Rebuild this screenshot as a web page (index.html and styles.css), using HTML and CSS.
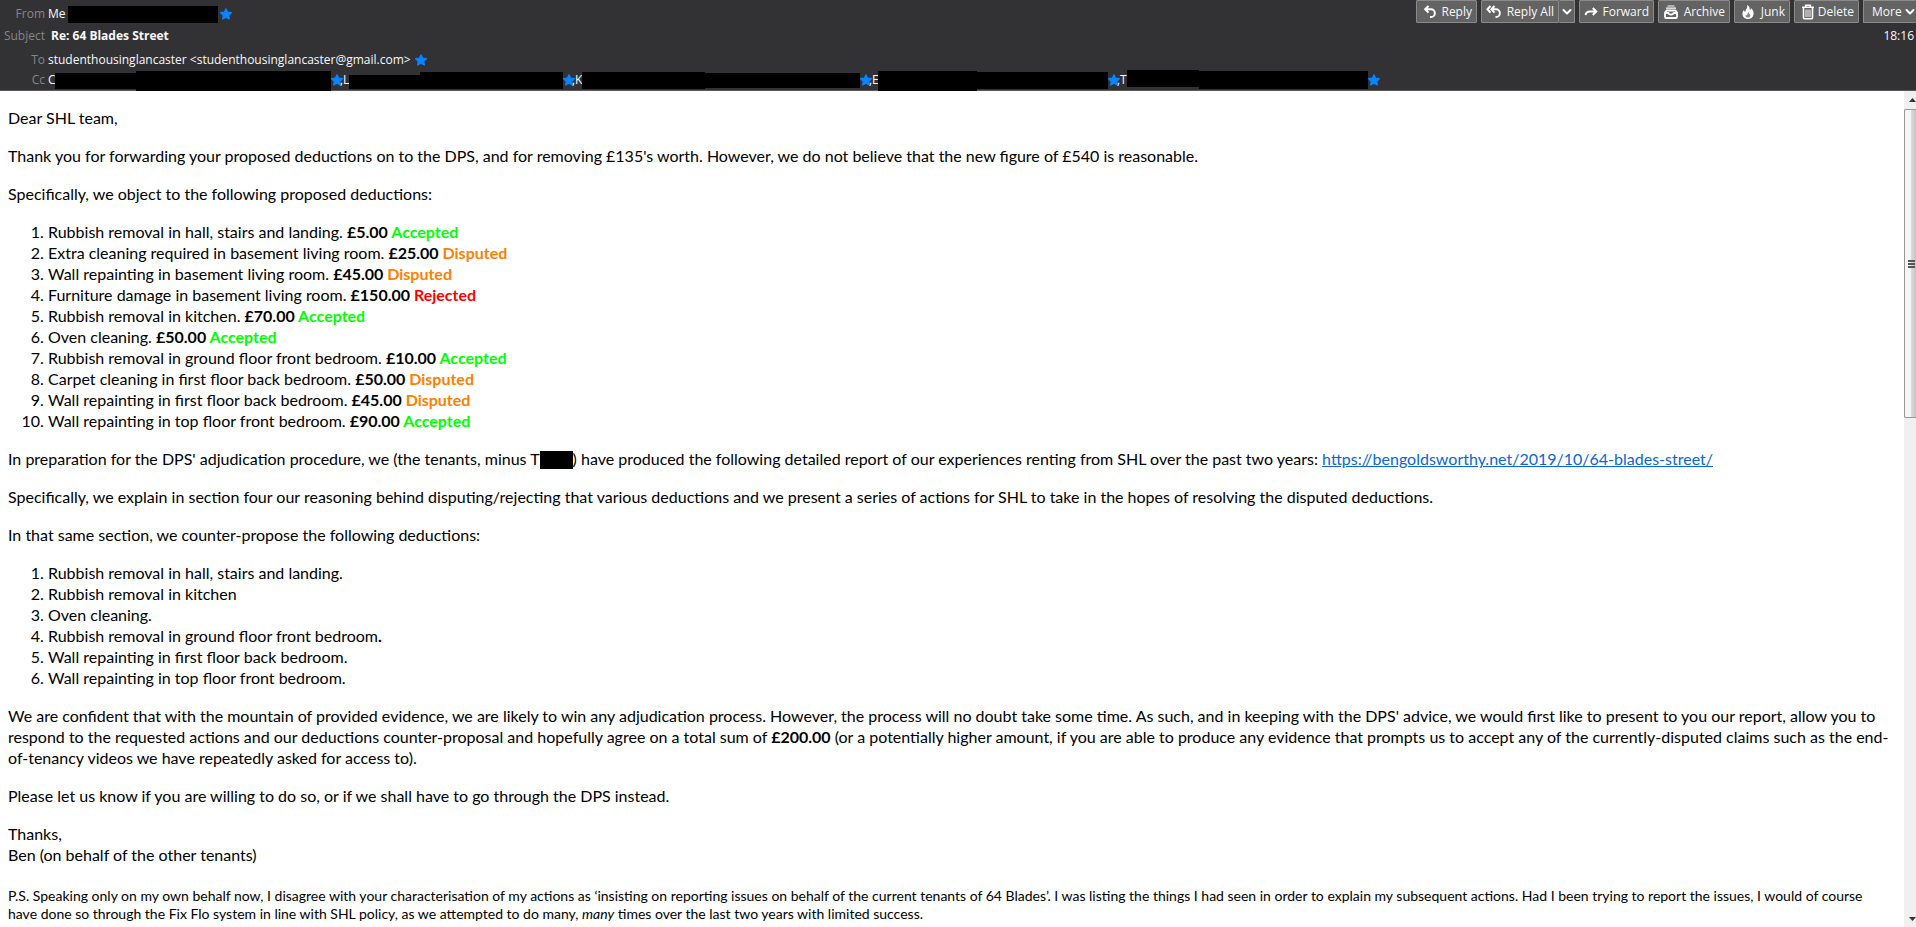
FILE: index.html
```html
<!DOCTYPE html>
<html lang="en">
<head>
    <meta charset="UTF-8">
    <meta name="viewport" content="width=device-width, initial-scale=1.0">
    <title>Re: 64 Blades Street</title>
    <link rel="stylesheet" href="styles.css">
</head>
<body>
    <svg class="defs" width="0" height="0">
        <symbol id="star" viewBox="0 0 12 12">
            <path d="M6 .8 7.700 4.200l3.700.5-2.700 2.600.7 3.700L6 9.300 2.600 11l.7-3.700L.6 4.700l3.700-.5z" fill="#0a84ff" stroke="#0a84ff" stroke-width="1.200" stroke-linejoin="round"/>
        </symbol>
        <symbol id="chevron" viewBox="0 0 10 10">
            <path d="M1.500 3 5 6.500 8.500 3" fill="none" stroke="#fff" stroke-width="2" stroke-linecap="round" stroke-linejoin="round"/>
        </symbol>
    </svg>

    <header class="header">
        <div class="fields">
            <div class="row from">
                <span class="label">From</span>
                <span class="value">Me</span>
                <span class="redacted me"></span>
                <svg class="star"><use href="#star"/></svg>
            </div>
            <div class="row subject">
                <span class="label">Subject</span>
                <b class="value">Re: 64 Blades Street</b>
            </div>
            <div class="row to">
                <span class="label">To</span>
                <span class="value">studenthousinglancaster &lt;studenthousinglancaster@gmail.com&gt;</span>
                <svg class="star"><use href="#star"/></svg>
            </div>
            <div class="row cc">
                <span class="label">Cc</span>
                <span class="person c"><span class="initial">C</span><i></i><i></i><svg class="star"><use href="#star"/></svg></span>
                <span class="person l"><span class="initial">,L</span><i></i><i></i><svg class="star"><use href="#star"/></svg></span>
                <span class="person k"><span class="initial">,K</span><i></i><i></i><svg class="star"><use href="#star"/></svg></span>
                <span class="person e"><span class="initial">,E</span><i></i><i></i><svg class="star"><use href="#star"/></svg></span>
                <span class="person t"><span class="initial">,T</span><i></i><i></i><svg class="star"><use href="#star"/></svg></span>
            </div>
        </div>

        <div class="side">
            <div class="toolbar">
                <button class="reply">
                    <svg width="14" height="14" viewBox="0 0 14 14" fill="none" stroke="#fff" stroke-width="2"><path d="M5.500 1 2.200 4.300l3.300 3.300M2.500 4.300H8a3.800 3.800 0 0 1 0 7.700H7"/></svg>
                    Reply
                </button>
                <div class="split">
                    <button class="reply-all">
                        <svg width="16" height="14" viewBox="0 0 16 14" fill="none" stroke="#fff" stroke-width="2"><path d="M4.500 1 1.400 4.300l3.100 3.300M8.500 1 5.400 4.300l3.100 3.300M5.700 4.300H10a3.800 3.800 0 0 1 0 7.700H9.500"/></svg>
                        Reply All
                    </button>
                    <button class="drop" aria-label="Reply options"><svg width="10" height="10"><use href="#chevron"/></svg></button>
                </div>
                <button class="forward">
                    <svg width="14" height="14" viewBox="0 0 14 14" fill="none" stroke="#fff" stroke-width="2"><path d="M1.500 10C2 7.500 3.500 6.500 6 6.500h6M8.800 3l3.500 3.500L8.800 10"/></svg>
                    Forward
                </button>
                <button class="archive">
                    <svg width="16" height="14" viewBox="0 0 16 14" fill="none" stroke="#fff" stroke-linejoin="round"><path d="M4.500 1h7M3 3.200h10" stroke-width="1.200"/><path d="M2 7.500 3.500 5.500h9L14 7.500V12a1 1 0 0 1-1 1H3a1 1 0 0 1-1-1zM2 8h3.500c0 2 5 2 5 0H14" stroke-width="1.800"/></svg>
                    Archive
                </button>
                <button class="junk">
                    <svg width="14" height="16" viewBox="0 0 14 16"><path d="M6 1c3 1.500 2.500 3.500 3 5 .8-.3 1-1.300.9-2C12 6 13 8 12.500 10.500 12 13.500 9.500 15 7 15s-5.200-1.500-5.500-4.500C1.300 8.500 2 7 3 6c.2 1.200.5 1.800 1.300 2C4.500 5 7 4 6 1z" fill="#fff"/><path d="M7 7.500c.5 2 2.800 2.800 2.300 4.500C9 13.200 8 13.600 7 13.600S4.400 13 4.300 11.500C5.500 12 7 10.500 7 7.500z" fill="#888"/></svg>
                    Junk
                </button>
                <button class="delete">
                    <svg width="14" height="16" viewBox="0 0 14 16" fill="none" stroke="#fff"><path d="M1 3.200h12M4.700 3V1.200h4.600V3" stroke-width="1.600"/><path d="M2.500 4v9.500a1.200 1.200 0 0 0 1.200 1.200h6.600a1.200 1.200 0 0 0 1.200-1.200V4" stroke-width="1.600"/><path d="M5 5.500V13M7 5.500V13M9 5.500V13"/></svg>
                    Delete
                </button>
                <button class="more">More <svg width="10" height="10"><use href="#chevron"/></svg></button>
            </div>
            <time class="time">18:16</time>
        </div>
    </header>

    <div class="pane">
        <main class="message">
            <p>Dear SHL team,</p>
            <p>Thank you for forwarding your proposed deductions on to the DPS, and for removing £135's worth. However, we do not believe that the new figure of £540 is reasonable.</p>
            <p>Specifically, we object to the following proposed deductions:</p>
            <ol>
                <li>Rubbish removal in hall, stairs and landing. <b>£5.00 <span class="accepted">Accepted</span></b></li>
                <li>Extra cleaning required in basement living room. <b>£25.00 <span class="disputed">Disputed</span></b></li>
                <li>Wall repainting in basement living room. <b>£45.00 <span class="disputed">Disputed</span></b></li>
                <li>Furniture damage in basement living room. <b>£150.00 <span class="rejected">Rejected</span></b></li>
                <li>Rubbish removal in kitchen. <b>£70.00 <span class="accepted">Accepted</span></b></li>
                <li>Oven cleaning. <b>£50.00 <span class="accepted">Accepted</span></b></li>
                <li>Rubbish removal in ground floor front bedroom. <b>£10.00 <span class="accepted">Accepted</span></b></li>
                <li>Carpet cleaning in first floor back bedroom. <b>£50.00 <span class="disputed">Disputed</span></b></li>
                <li>Wall repainting in first floor back bedroom. <b>£45.00 <span class="disputed">Disputed</span></b></li>
                <li>Wall repainting in top floor front bedroom. <b>£90.00 <span class="accepted">Accepted</span></b></li>
            </ol>
            <p>In preparation for the DPS' adjudication procedure, we (the tenants, minus T<span class="redacted name"></span>) have produced the following detailed report of our experiences renting from SHL over the past two years: <a href="https://bengoldsworthy.net/2019/10/64-blades-street/">https://bengoldsworthy.net/2019/10/64-blades-street/</a></p>
            <p>Specifically, we explain in section four our reasoning behind disputing/rejecting that various deductions and we present a series of actions for SHL to take in the hopes of resolving the disputed deductions.</p>
            <p>In that same section, we counter-propose the following deductions:</p>
            <ol>
                <li>Rubbish removal in hall, stairs and landing.</li>
                <li>Rubbish removal in kitchen</li>
                <li>Oven cleaning.</li>
                <li>Rubbish removal in ground floor front bedroom<b>.</b></li>
                <li>Wall repainting in first floor back bedroom.</li>
                <li>Wall repainting in top floor front bedroom.</li>
            </ol>
            <p>We are confident that with the mountain of provided evidence, we are likely to win any adjudication process. However, the process will no doubt take some time. As such, and in keeping with the DPS' advice, we would first like to present to you our report, allow you to respond to the requested actions and our deductions counter-proposal and hopefully agree on a total sum of <b>£200.00</b> (or a potentially higher amount, if you are able to produce any evidence that prompts us to accept any of the currently-disputed claims such as the end-of-tenancy videos we have repeatedly asked for access to).</p>
            <p>Please let us know if you are willing to do so, or if we shall have to go through the DPS instead.</p>
            <p>Thanks,<br>Ben (on behalf of the other tenants)</p>
            <p class="ps">P.S. Speaking only on my own behalf now, I disagree with your characterisation of my actions as ‘insisting on reporting issues on behalf of the current tenants of 64 Blades’. I was listing the things I had seen in order to explain my subsequent actions. Had I been trying to report the issues, I would of course have done so through the Fix Flo system in line with SHL policy, as we attempted to do many, <em>many</em> times over the last two years with limited success.</p>
        </main>
        <div class="scrollbar">
            <svg class="arrow" viewBox="0 0 7 4"><path d="M0 4 3.500 0 7 4z" fill="#333"/></svg>
            <div class="thumb"><i></i><i></i><i></i></div>
            <svg class="arrow down" viewBox="0 0 7 4"><path d="M0 0h7L3.500 4z" fill="#333"/></svg>
        </div>
    </div>
</body>
</html>
```

FILE: styles.css
```css
* {
    box-sizing: border-box;
}
body {
    margin: 0;
    height: 100vh;
    display: flex;
    flex-direction: column;
    overflow: hidden;
    background: #fff;
    color: #000;
    font-family: Lato, Calibri, sans-serif;
    font-size: 16px;
    line-height: 21px;
}
.defs {
    display: none;
}

/* header */
.header {
    flex: none;
    display: flex;
    justify-content: space-between;
    background: #323234;
    border-bottom: 1px solid #5a5a5c;
    color: #f9f9fa;
    font-family: "Open Sans", "Segoe UI", sans-serif;
    font-size: 12px;
    line-height: 16px;
    white-space: nowrap;
}
.row {
    display: flex;
    align-items: center;
    height: 20px;
}
.row.from {
    height: 26px;
    padding-top: 2px;
}
.row.to {
    height: 24px;
    padding-top: 4px;
}
.label {
    width: 45px;
    margin-right: 3px;
    text-align: right;
    color: #868688;
}
.subject .value {
    margin-left: 3px;
}
.star {
    flex: none;
    width: 12px;
    height: 12px;
}
.to .star {
    margin-left: 4px;
}
.redacted {
    background: #000;
}
.redacted.me {
    width: 150px;
    height: 17px;
    margin: 0 2px 0 3px;
}
.from .value {
    width: 17px;
}

/* cc list, each address blacked out in two strips */
.cc {
    align-items: flex-start;
}
.cc .label {
    line-height: 20px;
}
.person {
    display: flex;
    align-items: flex-start;
    height: 20px;
}
.person .star {
    margin-top: 4px;
}
/* the comma tucks in under the star before it */
.initial {
    width: 9px;
    margin-left: -3px;
    line-height: 20px;
}
.person.c .initial {
    width: 7px;
    margin-left: 0;
}
.person.k .initial,
.person.t .initial {
    width: 10px;
}
.person i {
    height: 17px;
    margin-top: 2px;
    background: #000;
}
.c i:nth-of-type(1) { width: 81px; margin-top: 3px; height: 16px; }
.c i:nth-of-type(2) { width: 195px; margin-top: 1px; height: 20px; }
.l i:nth-of-type(1) { width: 71px; margin-top: 5px; height: 14px; }
.l i:nth-of-type(2) { width: 143px; }
.k i:nth-of-type(1) { width: 123px; }
.k i:nth-of-type(2) { width: 155px; margin-top: 3px; height: 15px; }
.e i:nth-of-type(1) { width: 99px; margin-top: 1px; height: 20px; }
.e i:nth-of-type(2) { width: 131px; }
.t i:nth-of-type(1) { width: 72px; margin-top: 0; }
.t i:nth-of-type(2) { width: 169px; margin-top: 1px; height: 18px; }

/* toolbar */
.side {
    display: flex;
    flex-direction: column;
    align-items: flex-end;
}
.toolbar {
    display: flex;
    gap: 4px;
    margin-bottom: 5px;
}
.toolbar button {
    display: flex;
    align-items: center;
    justify-content: space-between;
    height: 23px;
    margin: 0;
    padding: 0 4px 0 6px;
    border: 1px solid #8a8a8b;
    border-radius: 1px;
    background: #636364;
    color: #f9f9fa;
    font: inherit;
}
.toolbar .reply { width: 61px; }
.toolbar .reply-all { width: 78px; padding-left: 4px; }
.toolbar .forward { width: 75px; padding-left: 4px; }
.toolbar .archive { width: 72px; padding-left: 4px; }
.toolbar .junk { width: 56px; }
.toolbar .delete { width: 65px; }
.toolbar .more { width: 53px; padding: 0 1px 0 8px; border-right: 0; }
.split {
    display: flex;
}
.toolbar .drop {
    width: 16px;
    padding: 0;
    justify-content: center;
    border-left: 0;
}
.time {
    margin-right: 2px;
}

/* message */
.pane {
    flex: 1;
    min-height: 0;
    display: flex;
}
.message {
    flex: 1;
    padding: 16px 10px 0 8px;
    overflow: hidden;
}
.message p,
.message ol {
    margin: 0 0 17px;
}
.message ol {
    padding-left: 40px;
}
.message a {
    color: #0b66d8;
}
.redacted.name {
    display: inline-block;
    width: 33px;
    height: 18px;
    vertical-align: -4px;
}
.accepted {
    color: #00ff00;
}
.disputed {
    color: #ff8000;
}
.rejected {
    color: #ff0000;
}
.message .ps {
    margin-top: 22px;
    font-size: 14px;
    line-height: 18px;
}

/* scrollbar, cut off by the window edge */
.scrollbar {
    width: 12px;
    display: flex;
    flex-direction: column;
    background: #f0f0f0;
}
.arrow {
    width: 7px;
    height: 4px;
    margin: 7px 0 7px 5px;
}
.arrow.down {
    margin: auto 0 6px 5px;
}
.thumb {
    height: 37%;
    display: flex;
    flex-direction: column;
    align-items: flex-end;
    justify-content: center;
    gap: 1px;
    padding-right: 1px;
    border: 1px solid #979797;
    border-right: 0;
    border-radius: 2px 0 0 2px;
    background: linear-gradient(to right, #f5f5f5 50%, #dcdcde 55%, #c4c4c8);
}
.thumb i {
    width: 7px;
    height: 2px;
    background: #555;
}
```
